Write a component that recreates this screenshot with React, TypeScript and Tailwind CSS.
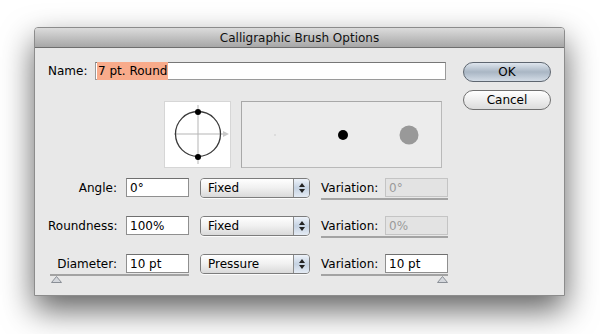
import React from "react";

const font = { fontFamily: '"DejaVu Sans", Verdana, sans-serif' };

function Slider({ side }: { side: "left" | "right" }) {
  return (
    <div className={side === "left" ? "flex pl-[3px]" : "flex justify-end pr-0"}>
      <svg width="11" height="7" viewBox="0 0 11 7">
        <polygon points="5.5,0.5 10.5,6.5 0.5,6.5" fill="#d4d7dc" stroke="#8a8f96" strokeWidth="1" />
      </svg>
    </div>
  );
}

function Dropdown({ value }: { value: string }) {
  return (
    <div className="flex h-[20px] w-[110px] overflow-hidden rounded-[4px] border border-[#7c7c7c] shadow-[0_1px_0_rgba(255,255,255,0.8)]">
      <div className="flex flex-1 items-center bg-gradient-to-b from-[#ffffff] via-[#f0f0f0] to-[#d9d9d9] pl-[7px] text-[12px] text-black">
        {value}
      </div>
      <div className="flex w-[16px] flex-col items-center justify-center gap-[2px] border-l border-[#8a8a8a] bg-gradient-to-b from-[#eef3fa] via-[#c5d2e2] to-[#e4ebf4]">
        <svg width="6" height="4" viewBox="0 0 6 4">
          <polygon points="3,0 6,4 0,4" fill="#222" />
        </svg>
        <svg width="6" height="4" viewBox="0 0 6 4">
          <polygon points="0,0 6,0 3,4" fill="#222" />
        </svg>
      </div>
    </div>
  );
}

function Field({ value, disabled }: { value: string; disabled?: boolean }) {
  return (
    <div
      className={
        disabled
          ? "flex h-[19px] w-[63px] items-center border border-[#c4c4c4] bg-[#e3e3e3] pl-[3px] text-[12px] text-[#9a9a9a]"
          : "flex h-[19px] w-[63px] items-center border border-[#8f8f8f] border-t-[#6f6f6f] bg-white pl-[3px] text-[12px] text-black"
      }
    >
      {value}
    </div>
  );
}

function Variation({ value, disabled, marker }: { value: string; disabled?: boolean; marker?: boolean }) {
  return (
    <div className="flex w-[127px] flex-col">
      <div className="flex items-center border-b-2 border-[#a3a3a3] pb-[1px]">
        <span className="w-[64px] text-[12px] text-black">Variation:</span>
        <Field value={value} disabled={disabled} />
      </div>
      {marker ? <Slider side="right" /> : null}
    </div>
  );
}

export default function App() {
  return (
    <div className="h-[334px] w-[600px] bg-white pl-[34px] pt-[27px]" style={font}>
      <div className="w-[531px] overflow-hidden rounded-t-[4px] border border-[#8c8c8c] bg-[#e8e8e8] shadow-[0_14px_32px_rgba(0,0,0,0.62)]">
        <div className="flex h-[20px] items-center justify-center border-b border-[#6e6e6e] bg-gradient-to-b from-[#dcdcdc] to-[#a7a7a7] text-[12px] text-[#111]">
          Calligraphic Brush Options
        </div>

        <div className="flex h-[247px] pl-[13px] pr-[13px] pt-[14px]">
          <div className="flex w-[400px] flex-col">
            <div className="flex items-center">
              <span className="w-[47px] text-[12px] text-black">Name:</span>
              <div className="flex h-[18px] w-[351px] items-center border border-[#9a9a9a] border-t-[#777] bg-white pl-[1px] text-[12px] text-black">
                <span className="bg-[#f8ab8b] pr-[1px] pl-[1px]">7 pt. Round</span>
              </div>
            </div>

            <div className="mt-[21px] flex pl-[116px]">
              <div className="h-[67px] w-[67px] border border-[#d6d6d6] bg-white">
                <svg width="65" height="65" viewBox="0 0 65 65">
                  <line x1="9" y1="32" x2="60" y2="32" stroke="#b5b5b5" strokeWidth="1" />
                  <polygon points="58,29 64,32 58,35" fill="#c8c8c8" />
                  <line x1="33" y1="3" x2="33" y2="62" stroke="#b5b5b5" strokeWidth="1" />
                  <circle cx="33" cy="32" r="22.5" fill="none" stroke="#3a3a3a" strokeWidth="1.3" />
                  <circle cx="33" cy="10" r="3" fill="#000" />
                  <circle cx="33" cy="55" r="3" fill="#000" />
                </svg>
              </div>
              <div className="ml-[10px] flex h-[67px] w-[201px] items-center border border-[#b9b9b9] border-l-[#a8a8a8] border-t-[#a8a8a8] bg-[#ececec]">
                <svg width="199" height="65" viewBox="0 0 199 65">
                  <circle cx="33" cy="33" r="0.8" fill="#c8c8c8" />
                  <circle cx="101" cy="33" r="5" fill="#000" />
                  <circle cx="167" cy="33" r="9.5" fill="#999" />
                </svg>
              </div>
            </div>

            <div className="mt-[10px] flex flex-col gap-[16px]">
              <div className="flex items-start">
                <div className="flex w-[141px] items-center">
                  <span className="w-[78px] pr-[9px] text-right text-[12px] text-black">Angle:</span>
                  <Field value="0°" />
                </div>
                <div className="ml-[11px]">
                  <Dropdown value="Fixed" />
                </div>
                <div className="ml-[11px]">
                  <Variation value="0°" disabled />
                </div>
              </div>
              <div className="flex items-start">
                <div className="flex w-[141px] items-center">
                  <span className="w-[78px] pr-[9px] text-right text-[12px] text-black">Roundness:</span>
                  <Field value="100%" />
                </div>
                <div className="ml-[11px]">
                  <Dropdown value="Fixed" />
                </div>
                <div className="ml-[11px]">
                  <Variation value="0%" disabled />
                </div>
              </div>
              <div className="flex items-start">
                <div className="flex w-[141px] flex-col">
                  <div className="ml-[2px] flex items-center border-b-2 border-[#a3a3a3] pb-[1px]">
                    <span className="w-[76px] pr-[9px] text-right text-[12px] text-black">Diameter:</span>
                    <Field value="10 pt" />
                  </div>
                  <Slider side="left" />
                </div>
                <div className="ml-[11px]">
                  <Dropdown value="Pressure" />
                </div>
                <div className="ml-[11px]">
                  <Variation value="10 pt" marker />
                </div>
              </div>
            </div>
          </div>

          <div className="ml-[15px] flex w-[89px] flex-col gap-[8px]">
            <button className="flex h-[20px] items-center justify-center rounded-full border border-[#5e6670] bg-gradient-to-b from-[#dfe6ee] via-[#a9b6c4] to-[#d3dce6] text-[12px] text-black">
              OK
            </button>
            <button className="flex h-[20px] items-center justify-center rounded-full border border-[#707070] bg-gradient-to-b from-[#ffffff] via-[#eeeeee] to-[#dcdcdc] text-[12px] text-black">
              Cancel
            </button>
          </div>
        </div>
      </div>
    </div>
  );
}
